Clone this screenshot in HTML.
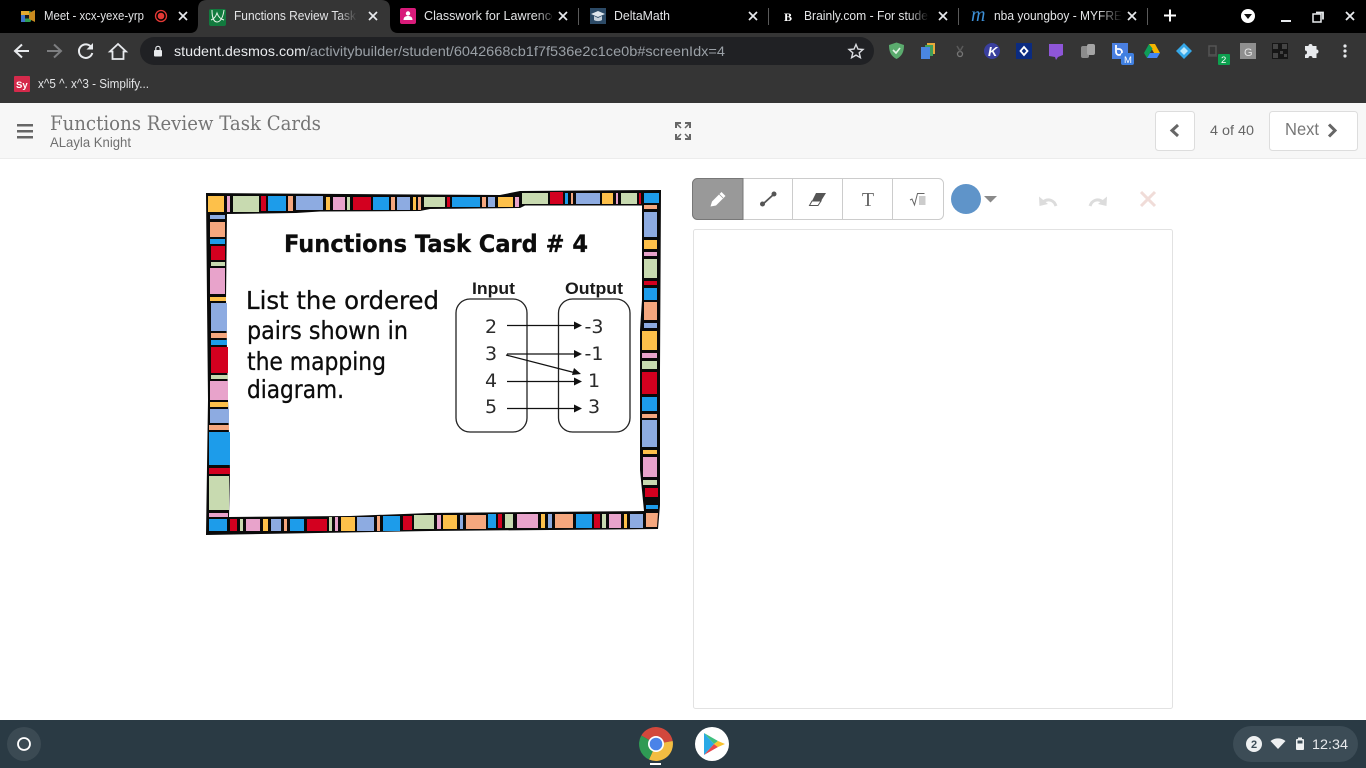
<!DOCTYPE html>
<html>
<head>
<meta charset="utf-8">
<title>Functions Review Task Cards</title>
<style>
html,body{margin:0;padding:0;width:1366px;height:768px;overflow:hidden;background:#fff}
svg{display:block;position:absolute;left:0;top:0}
text{font-family:"Liberation Sans",sans-serif}
.tab{font-size:13px;fill:#e3e4e6}
.hand{font-family:"DejaVu Sans",sans-serif;fill:#0c0c0c;stroke:#0c0c0c;stroke-width:.3}
.num{font-family:"DejaVu Sans",sans-serif;font-size:19px;fill:#2b2b2b;text-anchor:middle}
</style>
</head>
<body>
<svg width="1366" height="768" viewBox="0 0 1366 768" xmlns="http://www.w3.org/2000/svg">
<defs>
<linearGradient id="fb" x1="0" x2="1" y1="0" y2="0"><stop offset="0" stop-color="#000" stop-opacity="0"/><stop offset="1" stop-color="#000"/></linearGradient>
<linearGradient id="fa" x1="0" x2="1" y1="0" y2="0"><stop offset="0" stop-color="#353535" stop-opacity="0"/><stop offset="1" stop-color="#353535"/></linearGradient>
</defs>

<!-- browser chrome -->
<rect x="0" y="0" width="1366" height="33" fill="#000"/>
<rect x="0" y="33" width="1366" height="70" fill="#353535"/>
<path d="M190 33C196 33 198 29 198 24V9C198 3 201 0 207 0H381C387 0 390 3 390 9V24C390 29 392 33 398 33Z" fill="#353535"/>

<!-- tab favicons -->
<g>
<rect x="21" y="11" width="10" height="11" rx="1.5" fill="#2f9e55"/><rect x="21" y="11" width="8" height="4" fill="#e2a92f"/><rect x="21" y="15" width="4" height="7" fill="#3f74c9"/><path d="M29 13l6-3v12l-6-3z" fill="#c98a1f"/><rect x="25" y="15" width="4" height="3.500" fill="#1a1a1a"/>
<circle cx="161" cy="16" r="5.5" fill="none" stroke="#e53935" stroke-width="1.300"/><circle cx="161" cy="16" r="3.300" fill="#e53935"/>
<rect x="209" y="9" width="17" height="17" rx="2" fill="#127a3e"/><path d="M212 10c0 8 2 12 5 12s6-4 7-12M211 20c3-1 5-4 6-7 1 3 3 6 7 7" fill="none" stroke="#e8f5e9" stroke-width="1"/>
<rect x="400" y="8" width="16" height="16" rx="2" fill="#d81b7a"/><circle cx="408" cy="13.500" r="2.200" fill="#fff"/><path d="M403.500 20c0-3 2-4 4.500-4s4.500 1 4.500 4z" fill="#fff"/>
<rect x="590" y="8" width="16" height="16" fill="#2c4a66"/><path d="M591 14l7-3 7 3-7 3z" fill="#dfe6ec"/><path d="M594 16v4c2 1.500 6 1.500 8 0v-4l-4 2z" fill="#c5d0da"/>
<text x="784" y="21" font-weight="bold" font-size="12" fill="#fff" style="font-family:'Liberation Serif',serif">B</text>
<text x="971" y="21" font-size="20" font-style="italic" fill="#3d8fd6" style="font-family:'Liberation Serif',serif">m</text>
</g>

<!-- tab titles -->
<text x="44" y="20" class="tab" textLength="100" lengthAdjust="spacingAndGlyphs">Meet - xcx-yexe-yrp</text>
<text x="234" y="20" class="tab" textLength="122" lengthAdjust="spacingAndGlyphs">Functions Review Task</text>
<rect x="338" y="8" width="19" height="16" fill="url(#fa)"/>
<text x="424" y="20" class="tab" textLength="134" lengthAdjust="spacingAndGlyphs">Classwork for Lawrence</text>
<rect x="534" y="8" width="25" height="16" fill="url(#fb)"/>
<rect x="552" y="8" width="7" height="16" fill="#000"/>
<text x="614" y="20" class="tab" textLength="56" lengthAdjust="spacingAndGlyphs">DeltaMath</text>
<text x="804" y="20" class="tab" textLength="124" lengthAdjust="spacingAndGlyphs">Brainly.com - For stude</text>
<rect x="908" y="8" width="21" height="16" fill="url(#fb)"/>
<text x="994" y="20" class="tab" textLength="128" lengthAdjust="spacingAndGlyphs">nba youngboy - MYFRE</text>
<rect x="1098" y="8" width="24" height="16" fill="url(#fb)"/>

<!-- tab close X -->
<g stroke="#e8eaed" stroke-width="1.700" fill="none">
<path d="M179 12l8 8M187 12l-8 8"/><path d="M369 12l8 8M377 12l-8 8"/><path d="M559 12l8 8M567 12l-8 8"/><path d="M749 12l8 8M757 12l-8 8"/><path d="M939 12l8 8M947 12l-8 8"/><path d="M1128 12l8 8M1136 12l-8 8"/>
</g>
<g fill="#5a5a5a"><rect x="578" y="8" width="1" height="17"/><rect x="768" y="8" width="1" height="17"/><rect x="958" y="8" width="1" height="17"/><rect x="1147" y="8" width="1" height="17"/></g>
<path d="M1170 9.500v12M1164 15.500h12" stroke="#fff" stroke-width="2" fill="none"/>
<circle cx="1248" cy="16" r="7" fill="#fff"/><path d="M1244 14h8l-4 5z" fill="#111"/>
<rect x="1281" y="20" width="10" height="2" fill="#e8eaed"/>
<rect x="1313" y="14" width="8" height="8" fill="none" stroke="#e8eaed" stroke-width="1.500"/><path d="M1316 12.500h7v7" fill="none" stroke="#e8eaed" stroke-width="1.800"/>
<path d="M1346 12l8 8M1354 12l-8 8" stroke="#e8eaed" stroke-width="1.800" fill="none"/>

<!-- nav -->
<path d="M29 51H16M22 44.500l-7 6.500 7 6.500" stroke="#e8eaed" stroke-width="2" fill="none"/>
<path d="M47 51h13M54 44.500l7 6.500-7 6.500" stroke="#7d7e80" stroke-width="2" fill="none"/>
<path d="M91.500 47.500a6.800 6.800 0 1 0 .8 5.500" stroke="#e8eaed" stroke-width="2" fill="none"/><path d="M93 43v6.500h-6.500z" fill="#e8eaed"/>
<path d="M118 44l-8 7.500h2.500V59h11v-7.500H126z" stroke="#e8eaed" stroke-width="1.800" fill="none"/>
<rect x="140" y="37" width="734" height="28" rx="14" fill="#202124"/>
<rect x="154" y="50" width="8" height="6.500" rx="1" fill="#e8eaed"/><path d="M155.800 50v-1.500a2.200 2.200 0 0 1 4.400 0V50" stroke="#e8eaed" stroke-width="1.200" fill="none"/>
<text x="174" y="56" font-size="14" fill="#e8eaed" textLength="132" lengthAdjust="spacingAndGlyphs">student.desmos.com</text>
<text x="306" y="56" font-size="14" fill="#9aa0a6" textLength="419" lengthAdjust="spacingAndGlyphs">/activitybuilder/student/6042668cb1f7f536e2c1ce0b#screenIdx=4</text>
<path d="M856 44.500l2 4.600 5 .4-3.800 3.300 1.200 4.900-4.400-2.600-4.400 2.600 1.200-4.900-3.800-3.300 5-.4z" fill="none" stroke="#dadce0" stroke-width="1.400"/>

<!-- extensions -->
<path d="M889 45l7.500-2.500L904 45c0 7-2 11-7.500 14-5.500-3-7.500-7-7.500-14z" fill="#5bab6e"/><path d="M893 50l3 3 4-5" stroke="#e6f4e8" stroke-width="1.600" fill="none"/>
<rect x="927" y="43" width="8" height="11" fill="#e7a93a"/><rect x="925" y="45" width="8" height="11" fill="#3f9e5c"/><rect x="921" y="47" width="9" height="12" fill="#4a86e0"/>
<circle cx="960" cy="54" r="2.500" fill="none" stroke="#777" stroke-width="1.300"/><path d="M957 46l3 5 3-5" stroke="#5a5a5a" stroke-width="1.500" fill="none"/>
<circle cx="992" cy="51" r="8" fill="#3a3f9e"/><text x="988" y="56" font-size="13" font-weight="bold" font-style="italic" fill="#fff">K</text>
<rect x="1016" y="43" width="16" height="16" fill="#0b2b80"/><path d="M1024 47l3.500 4-3.500 4-3.500-4z" fill="none" stroke="#fff" stroke-width="1.800"/>
<path d="M1049 44h14v11l-5 2-2 3-1-3-6-1z" fill="#8e56d8"/>
<rect x="1081" y="46" width="8" height="12" rx="2" fill="#8c8c8c"/><rect x="1087" y="44" width="8" height="11" rx="2" fill="#a4a4a4"/>
<rect x="1112" y="43" width="16" height="16" fill="#4a7fe0"/><path d="M1116 45v7a3 3 0 1 0 3-3h-2" stroke="#fff" stroke-width="1.800" fill="none"/>
<rect x="1121" y="53" width="13" height="12" rx="2" fill="#3f7fe0"/><text x="1124" y="63" font-size="9.500" fill="#fff">M</text>
<path d="M1149 44h6l5 9h-6z" fill="#f4b400"/><path d="M1149 44l-5 9 3 5 5.500-9.500z" fill="#0f9d58"/><path d="M1147 58h10l3-5h-10z" fill="#4285f4"/>
<path d="M1184 43l8 8-8 8-8-8z" fill="#35a7e8"/><path d="M1184 47l4 4-4 4-4-4z" fill="#bde8fb"/>
<path d="M1209 46h7v9h-7z" fill="none" stroke="#555" stroke-width="1.500"/><path d="M1208 56h9" stroke="#4c4c4c" stroke-width="1.500"/>
<rect x="1218" y="54" width="12" height="11" rx="1" fill="#0da04f"/><text x="1221" y="63" font-size="9.500" fill="#fff">2</text>
<rect x="1240" y="43" width="16" height="16" fill="#8f8f8f"/><text x="1244" y="56" font-size="11" fill="#e5e5e5">G</text>
<rect x="1272" y="43" width="16" height="16" fill="#161616"/><g fill="#444"><rect x="1273" y="44" width="5" height="5"/><rect x="1282" y="44" width="5" height="5"/><rect x="1273" y="53" width="5" height="5"/><rect x="1280" y="51" width="3" height="3"/><rect x="1284" y="54" width="3" height="3"/></g>
<path d="M1305 47h3.500a2 2 0 1 1 4 0h4v3.500a2 2 0 1 1 0 4V59h-4a2 2 0 1 0-4 0H1305v-3.500a2 2 0 1 0 0-4z" fill="#e8eaed" transform="translate(0,-1)"/>
<g fill="#e8eaed"><circle cx="1345" cy="46" r="1.600"/><circle cx="1345" cy="51" r="1.600"/><circle cx="1345" cy="56" r="1.600"/></g>

<!-- bookmark -->
<rect x="14" y="76" width="16" height="16" rx="1" fill="#d42a4b"/>
<text x="16" y="88" font-size="9.500" font-weight="bold" fill="#fff">Sy</text>
<text x="38" y="88" font-size="12.500" fill="#e3e4e6" textLength="111" lengthAdjust="spacingAndGlyphs">x^5 ^. x^3 - Simplify...</text>

<!-- desmos header -->
<rect x="0" y="103" width="1366" height="55" fill="#f7f7f7"/>
<rect x="0" y="158" width="1366" height="1" fill="#ececec"/>
<g fill="#666"><rect x="17" y="124" width="16" height="2.500"/><rect x="17" y="130" width="16" height="2.500"/><rect x="17" y="136" width="16" height="2.500"/></g>
<text x="50" y="130" font-size="19.500" fill="#757575" style="font-family:'DejaVu Serif',serif" textLength="271" lengthAdjust="spacingAndGlyphs">Functions Review Task Cards</text>
<text x="50" y="147" font-size="14" fill="#6f6f6f" textLength="81" lengthAdjust="spacingAndGlyphs">ALayla Knight</text>
<g fill="none" stroke="#666" stroke-width="2"><path d="M676 128v-5h5M685 123h5v5M690 134v5h-5M681 139h-5v-5"/><path d="M677 124l4 4M689 124l-4 4M689 138l-4-4M677 138l4-4" stroke-width="1.500"/></g>
<rect x="1155.500" y="111.500" width="39" height="39" rx="3" fill="#fff" stroke="#ddd"/>
<path d="M1178 125l-6 5.500 6 5.500" fill="none" stroke="#666" stroke-width="3"/>
<text x="1210" y="135" font-size="14" fill="#666" textLength="44" lengthAdjust="spacingAndGlyphs">4 of 40</text>
<rect x="1269.500" y="111.500" width="88" height="39" rx="3" fill="#fff" stroke="#ddd"/>
<text x="1285" y="135" font-size="17.500" fill="#777" textLength="34" lengthAdjust="spacingAndGlyphs">Next</text>
<path d="M1329 124.500l6 6-6 6" fill="none" stroke="#666" stroke-width="3"/>

<!-- task card frame -->
<path fill-rule="evenodd" fill="#0a0a0a" d="M206 193L500 195 520 191 661 190 660 370 660 505 658 529 430 531 206 535 208 400 207 300ZM227 214L296 213 320 211.500 420 211 430 209 520 208 525 205.500 642 205.500 642 300 640 330 640 470 644 511 430 513 350 516 229 517 230 470 228 400 226 300Z"/>
<g fill="#fdc04a"><rect x="208" y="196" width="16" height="16"/><rect x="326" y="197" width="4" height="13"/><rect x="413" y="197" width="3" height="13"/><rect x="498" y="197" width="15" height="10"/><rect x="602" y="193" width="11" height="11"/><rect x="644" y="240" width="13" height="9"/><rect x="642" y="331" width="15" height="19"/><rect x="643" y="450" width="14" height="4"/><rect x="210" y="297" width="16" height="4"/><rect x="210" y="402" width="18" height="5"/><rect x="263" y="519" width="5" height="12"/><rect x="341" y="517" width="14" height="14"/><rect x="443" y="515" width="14" height="14"/><rect x="541" y="514" width="4" height="14"/><rect x="624" y="514" width="3" height="14"/></g>
<g fill="#e8a3cb"><rect x="227" y="196" width="3" height="16"/><rect x="333" y="197" width="12" height="13"/><rect x="515" y="197" width="4" height="10"/><rect x="616" y="193" width="2" height="11"/><rect x="644" y="252" width="13" height="4"/><rect x="642" y="353" width="15" height="5"/><rect x="643" y="457" width="14" height="20"/><rect x="210" y="268" width="15" height="26"/><rect x="210" y="381" width="18" height="19"/><rect x="209" y="513" width="19" height="4"/><rect x="246" y="519" width="14" height="12"/><rect x="335" y="517" width="3" height="14"/><rect x="437" y="515" width="4" height="14"/><rect x="517" y="514" width="21" height="14"/><rect x="609" y="514" width="12" height="14"/></g>
<g fill="#c8dab0"><rect x="233" y="196" width="26" height="16"/><rect x="347" y="197" width="3" height="13"/><rect x="424" y="197" width="21" height="10"/><rect x="522" y="193" width="26" height="11"/><rect x="621" y="193" width="16" height="11"/><rect x="644" y="259" width="13" height="19"/><rect x="642" y="361" width="15" height="8"/><rect x="643" y="480" width="14" height="5"/><rect x="211" y="262" width="14" height="4"/><rect x="211" y="375" width="17" height="4"/><rect x="209" y="476" width="20" height="34"/><rect x="240" y="519" width="3" height="12"/><rect x="329" y="517" width="3" height="14"/><rect x="414" y="515" width="20" height="14"/><rect x="505" y="514" width="8" height="14"/><rect x="602" y="514" width="4" height="14"/></g>
<g fill="#d3001f"><rect x="261" y="196" width="5" height="15"/><rect x="353" y="197" width="18" height="13"/><rect x="447" y="197" width="3" height="10"/><rect x="550" y="192" width="13" height="12"/><rect x="639" y="193" width="2" height="11"/><rect x="644" y="281" width="13" height="4"/><rect x="642" y="372" width="15" height="22"/><rect x="645" y="488" width="13" height="9"/><rect x="211" y="246" width="14" height="14"/><rect x="211" y="347" width="17" height="26"/><rect x="209" y="468" width="21" height="6"/><rect x="230" y="519" width="7" height="12"/><rect x="307" y="519" width="20" height="12"/><rect x="403" y="516" width="9" height="14"/><rect x="498" y="514" width="4" height="14"/><rect x="594" y="514" width="6" height="14"/></g>
<g fill="#1d9cea"><rect x="268" y="196" width="18" height="15"/><rect x="373" y="197" width="16" height="13"/><rect x="452" y="197" width="28" height="10"/><rect x="565" y="193" width="3" height="11"/><rect x="644" y="193" width="15" height="10"/><rect x="644" y="288" width="13" height="12"/><rect x="642" y="397" width="15" height="14"/><rect x="646" y="505" width="12" height="4"/><rect x="210" y="239" width="15" height="5"/><rect x="211" y="340" width="16" height="5"/><rect x="209" y="432" width="21" height="33"/><rect x="209" y="519" width="18" height="12"/><rect x="290" y="519" width="14" height="12"/><rect x="383" y="516" width="17" height="15"/><rect x="488" y="514" width="8" height="14"/><rect x="576" y="514" width="16" height="14"/></g>
<g fill="#f5a77e"><rect x="288" y="196" width="5" height="15"/><rect x="391" y="197" width="4" height="13"/><rect x="418" y="197" width="3" height="13"/><rect x="482" y="197" width="4" height="10"/><rect x="571" y="193" width="2" height="11"/><rect x="644" y="205" width="13" height="4"/><rect x="644" y="302" width="13" height="18"/><rect x="642" y="414" width="15" height="4"/><rect x="210" y="222" width="15" height="15"/><rect x="211" y="333" width="16" height="5"/><rect x="209" y="425" width="20" height="5"/><rect x="284" y="519" width="3" height="12"/><rect x="377" y="516" width="3" height="15"/><rect x="466" y="515" width="20" height="14"/><rect x="555" y="514" width="18" height="14"/><path d="M646 513h12l-1 14h-11z"/></g>
<g fill="#8dabe1"><rect x="296" y="196" width="27" height="14"/><rect x="397" y="197" width="13" height="13"/><rect x="488" y="197" width="7" height="10"/><rect x="576" y="193" width="24" height="11"/><rect x="644" y="212" width="13" height="25"/><rect x="644" y="323" width="13" height="5"/><rect x="642" y="420" width="15" height="27"/><rect x="210" y="215" width="15" height="4"/><rect x="211" y="303" width="16" height="28"/><rect x="210" y="409" width="19" height="14"/><rect x="271" y="519" width="10" height="12"/><rect x="357" y="517" width="17" height="14"/><rect x="460" y="515" width="3" height="14"/><rect x="548" y="514" width="4" height="14"/><rect x="630" y="514" width="13" height="14"/></g>

<!-- task card text -->
<text x="284" y="252" class="hand" font-size="24" font-weight="bold" textLength="304" lengthAdjust="spacingAndGlyphs">Functions Task Card # 4</text>
<text x="246" y="309" class="hand" font-size="25" textLength="193" lengthAdjust="spacingAndGlyphs">List the ordered</text>
<text x="247" y="339" class="hand" font-size="25" textLength="161" lengthAdjust="spacingAndGlyphs">pairs shown in</text>
<text x="247" y="370" class="hand" font-size="25" textLength="139" lengthAdjust="spacingAndGlyphs">the mapping</text>
<text x="247" y="398" class="hand" font-size="25" textLength="97" lengthAdjust="spacingAndGlyphs">diagram.</text>
<text x="472" y="294" font-size="17" font-weight="bold" fill="#1a1a1a" textLength="43" lengthAdjust="spacingAndGlyphs">Input</text>
<text x="565" y="294" font-size="17" font-weight="bold" fill="#1a1a1a" textLength="58" lengthAdjust="spacingAndGlyphs">Output</text>
<rect x="456" y="299" width="71" height="133" rx="14" fill="none" stroke="#222" stroke-width="1.300"/>
<rect x="558.500" y="299" width="71.500" height="133" rx="14" fill="none" stroke="#222" stroke-width="1.300"/>
<text x="491" y="333" class="num">2</text><text x="491" y="360" class="num">3</text><text x="491" y="387" class="num">4</text><text x="491" y="413" class="num">5</text>
<text x="594" y="333" class="num">-3</text><text x="594" y="360" class="num">-1</text><text x="594" y="387" class="num">1</text><text x="594" y="413" class="num">3</text>
<g stroke="#111" stroke-width="1.300" fill="none"><path d="M507 325.500H575M507 354H575M507 381.500H575M507 408.500H575M506 355L574 372.500"/></g>
<g fill="#111"><path d="M574 321.500l8 4-8 4zM574 350l8 4-8 4zM574 377.500l8 4-8 4zM574 404.500l8 4-8 4zM574 368l7 6-9 1z"/></g>

<!-- sketch toolbar -->
<rect x="692.500" y="178.500" width="251" height="41" rx="5" fill="#fff" stroke="#ccc"/>
<path d="M697.500 178.500H743V219.500H697.500a5 5 0 0 1-5-5V183.500a5 5 0 0 1 5-5z" fill="#999" stroke="#777"/>
<g fill="#ccc"><rect x="792" y="179" width="1" height="40"/><rect x="842" y="179" width="1" height="40"/><rect x="892" y="179" width="1" height="40"/></g>
<path d="M710.500 206.500l1.500-5 9.500-9.500 4 4-9.500 9.500z" fill="#fff"/><path d="M719 194l4 4" stroke="#999" stroke-width=".8"/>
<path d="M762.500 204.500l11-10" stroke="#555" stroke-width="1.800"/><circle cx="762.500" cy="204" r="2.500" fill="#555"/><circle cx="774" cy="194" r="2.500" fill="#555"/>
<path d="M816 193h10l-5 8h-9z" fill="#555"/><path d="M812 201h9l-3 4.500h-8.500z" fill="#fff" stroke="#555"/>
<text x="868" y="206" font-size="20" fill="#666" text-anchor="middle" style="font-family:'Liberation Serif',serif">T</text>
<path d="M910 200l2-1 2.500 6 3-11.500h7" fill="none" stroke="#666" stroke-width="1"/><rect x="919" y="196" width="6.500" height="9" fill="#ccc"/>
<circle cx="966" cy="199" r="15" fill="#5f94c9"/>
<path d="M984 196h13l-6.500 6.500z" fill="#8a8a8a"/>
<g id="undo"><path d="M1056 206c-2-6-8-8-13-4" fill="none" stroke="#dcdcdc" stroke-width="3"/><path d="M1039 196.500l.5 9.500 8.500-2z" fill="#dcdcdc"/></g>
<g transform="translate(2146,0) scale(-1,1)"><path d="M1056 206c-2-6-8-8-13-4" fill="none" stroke="#dcdcdc" stroke-width="3"/><path d="M1039 196.500l.5 9.500 8.500-2z" fill="#dcdcdc"/></g>
<path d="M1141 192l14 14M1155 192l-14 14" stroke="#f0dcd8" stroke-width="3"/>

<!-- canvas -->
<rect x="693.500" y="229.500" width="479" height="479" rx="2" fill="#fff" stroke="#e2e2e2"/>

<!-- shelf -->
<rect x="0" y="720" width="1366" height="48" fill="#2a3a44"/>
<circle cx="24" cy="744" r="17" fill="#3b4a53"/><circle cx="24" cy="744" r="6" fill="none" stroke="#fff" stroke-width="1.800"/>
<path d="M656 744L641.300 735.500A17 17 0 0 1 672.700 741Z" fill="#d2483c"/>
<path d="M656 744L672.700 741A17 17 0 0 1 649 759.500Z" fill="#f3bd42"/>
<path d="M656 744L649 759.500A17 17 0 0 1 641.300 735.500Z" fill="#2f9a54"/>
<circle cx="656" cy="744" r="8" fill="#fff"/><circle cx="656" cy="744" r="6.300" fill="#4a83e8"/>
<rect x="650" y="763" width="11" height="2" fill="#fff"/>
<circle cx="712" cy="744" r="17" fill="#fff"/>
<path d="M704 733v22l10-11z" fill="#29a9e6"/><path d="M704 733l14 8-4 3z" fill="#3fbf7f"/><path d="M704 755l10-11 4 3z" fill="#e8474c"/><path d="M718 741l7 3-7 3-4-3z" fill="#f9c22e"/>
<rect x="1233" y="726" width="125" height="36" rx="18" fill="#3c4c56"/>
<circle cx="1254" cy="744" r="8" fill="#eef0f1"/><text x="1254" y="748" font-size="11" font-weight="bold" fill="#3c4c56" text-anchor="middle">2</text>
<path d="M1270.500 741c4.500-3.500 10.500-3.500 15 0l-7.500 8z" fill="#eef0f1"/>
<rect x="1296" y="739" width="8" height="11" rx="1" fill="#eef0f1"/><rect x="1298" y="737.500" width="4" height="2" fill="#eef0f1"/><rect x="1297.500" y="740.500" width="5" height="3" fill="#3c4c56"/>
<text x="1312" y="749" font-size="14" fill="#e8eaed" textLength="36" lengthAdjust="spacingAndGlyphs">12:34</text>
</svg>
</body>
</html>
